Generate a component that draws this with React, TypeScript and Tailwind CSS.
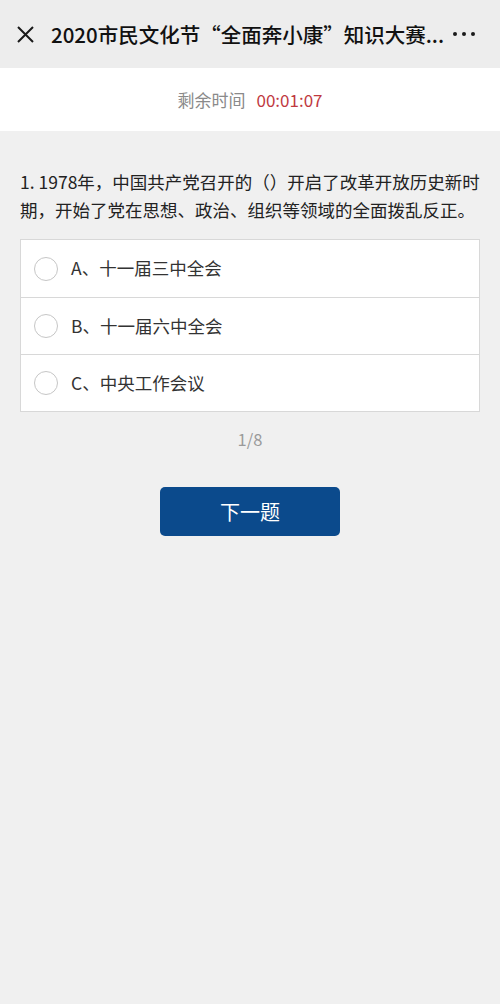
import React, { useState } from 'react';

const options = ['A、十一届三中全会', 'B、十一届六中全会', 'C、中央工作会议'];

export default function App() {
  const [picked, setPicked] = useState<number | null>(null);

  return (
    <div
      className="w-[500px] min-h-[1004px] bg-[#f0f0f0] flex flex-col"
      style={{ fontFamily: '"Noto Sans CJK SC", "Noto Sans", sans-serif' }}
    >
      {/* Top bar */}
      <header className="h-[68px] bg-[#ededed] flex items-center pl-[17px] pr-[25px] shrink-0">
        <svg width="17" height="17" viewBox="0 0 17 17" className="shrink-0">
          <path d="M1 1 L16 16 M16 1 L1 16" stroke="#1a1a1a" strokeWidth="2" fill="none" />
        </svg>
        <h1 className="ml-[17px] flex-1 text-[20.5px] font-medium text-[#111] whitespace-nowrap leading-none">
          2020市民文化节“全面奔小康”知识大赛...
        </h1>
        <div className="flex items-center gap-[5px] shrink-0">
          <span className="w-[4px] h-[4px] rounded-full bg-[#1a1a1a]" />
          <span className="w-[4px] h-[4px] rounded-full bg-[#1a1a1a]" />
          <span className="w-[4px] h-[4px] rounded-full bg-[#1a1a1a]" />
        </div>
      </header>

      {/* Countdown */}
      <div className="h-[63px] bg-white flex items-center justify-center gap-[11px] text-[17px] shrink-0">
        <span className="text-[#8a8a8a]">剩余时间</span>
        <span className="text-[#c0393f]">00:01:07</span>
      </div>

      {/* Question */}
      <div className="px-[20px] pt-[37px]">
        <p className="text-[17.5px] leading-[28px] text-[#222]">
          1. 1978年，中国共产党召开的（）开启了改革开放历史新时期，开始了党在思想、政治、组织等领域的全面拨乱反正。
        </p>

        <div className="mt-[15px] border border-[#d8d8d8] bg-white">
          {options.map((opt, i) => (
            <button
              key={opt}
              onClick={() => setPicked(i)}
              className={
                'w-full h-[57px] flex items-center pl-[13px] text-left ' +
                (i > 0 ? 'border-t border-[#d8d8d8]' : '')
              }
            >
              <span
                className={
                  'w-[24px] h-[24px] rounded-full border-[1.5px] shrink-0 flex items-center justify-center ' +
                  (picked === i ? 'border-[#0b4a8c]' : 'border-[#c6c6c6]')
                }
              >
                {picked === i && <span className="w-[12px] h-[12px] rounded-full bg-[#0b4a8c]" />}
              </span>
              <span className="ml-[13px] text-[17.5px] text-[#333]">{opt}</span>
            </button>
          ))}
        </div>

        <div className="mt-[15px] text-center text-[16.5px] leading-[24px] text-[#9a9a9a]">1/8</div>

        <div className="mt-[36px] flex justify-center">
          <button className="w-[180px] h-[49px] rounded-[5px] bg-[#0b4a8c] text-white text-[20px]">
            下一题
          </button>
        </div>
      </div>
    </div>
  );
}
